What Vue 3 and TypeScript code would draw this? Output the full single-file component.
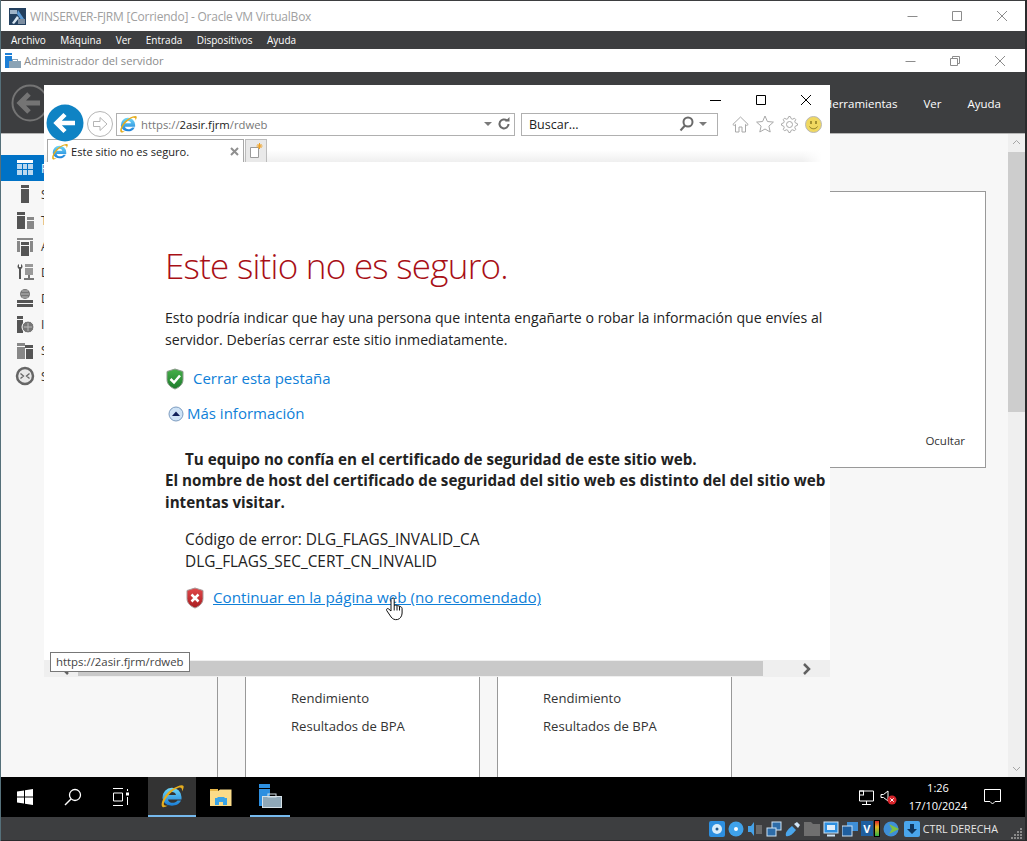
<template>
  <div class="screen">
    <svg class="defs" width="0" height="0">
      <defs>
        <linearGradient id="ieBlue" x1="0" y1="0" x2="0" y2="1">
          <stop offset="0" stop-color="#6fd8f8" />
          <stop offset="1" stop-color="#1a7ed8" />
        </linearGradient>
        <linearGradient id="shieldGreen" x1="0" y1="0" x2="0" y2="1">
          <stop offset="0" stop-color="#46b04a" />
          <stop offset="1" stop-color="#1c7a2c" />
        </linearGradient>
        <linearGradient id="shieldRed" x1="0" y1="0" x2="0" y2="1">
          <stop offset="0" stop-color="#e2484a" />
          <stop offset="1" stop-color="#a81c20" />
        </linearGradient>
        <symbol id="ie" viewBox="0 0 24 24">
          <path fill-rule="evenodd" d="M2.500 13.500a9.500 9.500 0 0 1 19-.5v2.500H8c.5 4 7 4.500 9.500 1H21c-3 7-15.500 7-18-.5-.3-.8-.5-1.600-.5-2.500zM8 11h8c-.5-4-7.500-4-8 0z" fill="url(#ieBlue)" />
          <path d="M2.500 23C-.5 21 4.500 9.500 11.500 5.500 17 2 22.500.2 23.500 2c.5 1-.3 3.500-1.500 5.500.3-3-.5-4.500-3.500-3.800C12.500 5.500 3.800 15 3.800 20c0 1.500 1.500 2 4 1.500-2 1.200-4.200 2.300-5.300 1.500z" fill="#e6ad1e" />
        </symbol>
      </defs>
    </svg>

    <header class="vbox-title">
      <svg class="vbox-logo" width="17" height="17" viewBox="0 0 17 17">
        <rect width="17" height="17" fill="#23405f" />
        <rect x="1" y="2" width="7" height="4" fill="#9fb4c8" />
        <path d="M9 2l6 9-2 2-5-7z" fill="#5c9bd6" />
        <path d="M3 15l5-7 2 2-5 6z" fill="#d8e6f2" />
        <rect x="9" y="11" width="7" height="5" fill="#7c8da0" />
      </svg>
      <span class="vbox-title__text">WINSERVER-FJRM [Corriendo] - Oracle VM VirtualBox</span>
      <div class="win-btns win-btns--grey">
        <svg width="12" height="12" viewBox="0 0 12 12"><path d="M1.500 6.500h10" /></svg>
        <svg width="12" height="12" viewBox="0 0 12 12"><path d="M1.500 1.500h9v9h-9z" /></svg>
        <svg width="12" height="12" viewBox="0 0 12 12"><path d="M1 1l10 10M11 1L1 11" /></svg>
      </div>
    </header>

    <nav class="vbox-menu">
      <span v-for="item in vboxMenu" :key="item">{{ item }}</span>
    </nav>

    <div class="guest">
      <div class="sm-title">
        <svg width="18" height="18" viewBox="0 0 18 18">
          <rect x="1" y="1" width="7" height="2" fill="#1c7fd6" />
          <rect x="1" y="4" width="7" height="12" fill="#1c7fd6" />
          <rect x="5" y="9" width="12" height="7" fill="#8aa3b5" />
          <rect x="8.500" y="7.500" width="5" height="2" fill="none" stroke="#8aa3b5" />
        </svg>
        <span class="sm-title__text">Administrador del servidor</span>
        <div class="win-btns win-btns--grey win-btns--sm">
          <svg width="12" height="12" viewBox="0 0 12 12"><path d="M1.500 6.500h10" /></svg>
          <svg width="12" height="12" viewBox="0 0 12 12"><path d="M1.500 3.500h7v7h-7zM3.500 3.500v-2h7v7h-2" /></svg>
          <svg width="12" height="12" viewBox="0 0 12 12"><path d="M1 1l10 10M11 1L1 11" /></svg>
        </div>
      </div>

      <div class="sm-head">
        <svg class="sm-head__back" width="38" height="38" viewBox="0 0 38 38">
          <circle cx="19" cy="19" r="17.500" fill="none" stroke="#747474" stroke-width="2" />
          <path d="M29 19H10M18 10l-9 9 9 9" fill="none" stroke="#747474" stroke-width="5" />
        </svg>
        <div class="sm-head__menu">
          <span v-for="item in smMenu" :key="item">{{ item }}</span>
        </div>
      </div>

      <div class="sm-main">
        <aside class="side">
          <div
            v-for="(row, i) in sideRows"
            :key="i"
            class="side__row"
            :class="{ 'side__row--on': i === 0 }"
          >
            <svg width="22" height="22" viewBox="0 0 22 22" v-html="row.icon"></svg>
            <span>{{ row.label }}</span>
          </div>
        </aside>

        <main class="content">
          <div class="panel"><span class="panel__hide">Ocultar</span></div>
          <div class="cards">
            <div class="cards__stub"></div>
            <div v-for="n in 2" :key="n" class="card">
              <span>Rendimiento</span>
              <span>Resultados de BPA</span>
            </div>
          </div>
        </main>

        <div class="vscroll">
          <svg width="17" height="17" viewBox="0 0 17 17"><path d="M5 10l3.500-3.500L12 10" /></svg>
          <div class="vscroll__thumb"></div>
          <svg class="vscroll__down" width="17" height="17" viewBox="0 0 17 17"><path d="M5 7l3.500 3.500L12 7" /></svg>
        </div>
      </div>

      <div class="taskbar">
        <div class="task task--plain">
          <svg width="18" height="18" viewBox="0 0 18 18"><path d="M1 3.500l7-1v6H1zM9 2.300l8-1.200v7.400H9zM1 9.500h7v6l-7-1zM9 9.500h8v7.400l-8-1.200z" fill="#fff" /></svg>
        </div>
        <div class="task task--plain">
          <svg width="20" height="20" viewBox="0 0 20 20"><circle cx="12" cy="8" r="5.500" fill="none" stroke="#fff" stroke-width="1.300" /><path d="M8 12l-6 6" stroke="#fff" stroke-width="1.500" /></svg>
        </div>
        <div class="task task--plain">
          <svg width="18" height="18" viewBox="0 0 18 18"><path d="M1 .500h10M1 17.500h10M1.500 5h9v8h-9zM15.500 1v2M15.500 9v8" fill="none" stroke="#fff" /><rect x="14" y="4.500" width="3" height="3" fill="#fff" /></svg>
        </div>
        <div class="task task--ie">
          <svg width="24" height="24"><use href="#ie" /></svg>
        </div>
        <div class="task task--files">
          <svg width="22" height="19" viewBox="0 0 22 19">
            <path d="M0 3h8l2-1.500h11.500V18H0z" fill="#fbdc89" />
            <path d="M0 1h8v2H0z" fill="#e9b94b" />
            <path d="M5 17v-7h2.500v-1h7v1H17v7h-4v-3H9v3z" fill="#3aa4e6" />
          </svg>
        </div>
        <div class="task task--sm">
          <svg width="25" height="25" viewBox="0 0 25 25">
            <path d="M1 0h11v4H1zM1 5h11v17H1z" fill="#2d8fe0" />
            <rect x="4.500" y="12.500" width="19" height="11" fill="#8fa8b8" stroke="#d6e1e8" />
            <rect x="10" y="10" width="8" height="3" fill="none" stroke="#d6e1e8" />
          </svg>
        </div>
        <div class="tray">
          <svg width="17" height="17" viewBox="0 0 17 17"><path d="M1.500 2h14v10h-14zM8.500 12v3M4 15.500h9" fill="none" stroke="#fff" /><rect x="1.500" y="2" width="4" height="4" fill="none" stroke="#fff" /></svg>
          <svg class="tray__vol" width="17" height="16" viewBox="0 0 17 16">
            <path d="M1 5.500h2.500L8 2v10L3.500 8.500H1z" fill="none" stroke="#fff" />
            <circle cx="12" cy="11" r="4.500" fill="#d8232a" />
            <path d="M10.300 9.300l3.400 3.400M13.700 9.300l-3.400 3.400" stroke="#fff" />
          </svg>
          <div class="clock">
            <span>1:26</span>
            <span>17/10/2024</span>
          </div>
          <svg class="tray__note" width="17" height="16" viewBox="0 0 17 16"><path d="M.500.500h16v12h-5.500l-2.500 2.500L6 12.500H.500z" fill="none" stroke="#fff" /></svg>
        </div>
      </div>
    </div>

    <footer class="status">
      <svg width="16" height="16" viewBox="0 0 16 16"><rect width="16" height="16" rx="2" fill="#2d8fe0" /><circle cx="8" cy="8" r="5" fill="#d8ecfa" /><circle cx="8" cy="8" r="1.500" fill="#245a8c" /></svg>
      <svg width="16" height="16" viewBox="0 0 16 16"><circle cx="8" cy="8" r="7.500" fill="#3fa2ea" /><circle cx="8" cy="8" r="2" fill="#fff" /></svg>
      <svg width="16" height="16" viewBox="0 0 16 16"><path d="M1 5h3l3-4v14l-3-4H1z" fill="#45a2e8" /><rect x="9" y="4" width="6" height="9" fill="#6c6c6c" /></svg>
      <svg width="16" height="16" viewBox="0 0 16 16"><rect x="6" y="1" width="9" height="8" fill="#2d6ca8" stroke="#cfe4f5" /><rect x="1" y="7" width="9" height="8" fill="#2d6ca8" stroke="#cfe4f5" /></svg>
      <svg width="16" height="16" viewBox="0 0 16 16"><path d="M1 15c-1-3 1-6 6-10l4 4c-4 5-7 7-10 6z" fill="#4aa6ec" /><path d="M9 3l3-2 3 3-2 3z" fill="#cfe4f5" /></svg>
      <svg width="16" height="16" viewBox="0 0 16 16"><path d="M0 1h7l2 2h7v12H0z" fill="#6f6f6f" /></svg>
      <svg width="16" height="16" viewBox="0 0 16 16"><rect x="1" y="1" width="14" height="11" fill="#2d8fe0" stroke="#cfe4f5" /><rect x="4" y="4" width="8" height="5" fill="#dfeefb" /><path d="M4 14.500h8" stroke="#cfe4f5" stroke-width="2" /></svg>
      <svg width="16" height="16" viewBox="0 0 16 16"><rect x="5" y="1" width="11" height="9" fill="#3f8fd6" /><rect x="0" y="5" width="10" height="10" fill="#1f5f9f" stroke="#cfe4f5" /></svg>
      <span class="status__v">V</span>
      <span class="status__meter"></span>
      <svg width="18" height="16" viewBox="0 0 18 16"><circle cx="8" cy="8" r="7.500" fill="#3f8fd6" /><path d="M6 3l10 5-10 5 3-5z" fill="#7fc241" /></svg>
      <svg width="16" height="16" viewBox="0 0 16 16"><rect width="16" height="16" rx="2" fill="#4aa6ec" /><path d="M6 3h4v5h3l-5 5-5-5h3z" fill="#10365c" /></svg>
      <span class="status__key">CTRL DERECHA</span>
      <svg class="status__grip" width="12" height="12" viewBox="0 0 12 12">
        <path d="M9 1h2v2H9zM6 4h2v2H6zM9 4h2v2H9zM3 7h2v2H3zM6 7h2v2H6zM9 7h2v2H9zM0 10h2v2H0zM3 10h2v2H3zM6 10h2v2H6zM9 10h2v2H9z" fill="#8a8a8a" />
      </svg>
    </footer>

    <section class="ie">
      <div class="ie__caption">
        <div class="win-btns win-btns--dark">
          <svg width="12" height="12" viewBox="0 0 12 12"><path d="M0 6.500h11" /></svg>
          <svg width="12" height="12" viewBox="0 0 12 12"><path d="M1.500 1.500h9v9h-9z" /></svg>
          <svg width="12" height="12" viewBox="0 0 12 12"><path d="M1 1l10 10M11 1L1 11" /></svg>
        </div>
      </div>

      <div class="ie__bar">
        <svg class="ie__back" width="38" height="38" viewBox="0 0 38 38">
          <circle cx="19" cy="19" r="18.500" fill="#0f83c4" />
          <path d="M29 19H11M19 10.500L10.500 19l8.500 8.500" fill="none" stroke="#fff" stroke-width="4.500" />
        </svg>
        <svg class="ie__fwd" width="26" height="26" viewBox="0 0 26 26">
          <circle cx="13" cy="13" r="12.500" fill="#fff" stroke="#b5b5b5" />
          <path d="M6.500 10.500h6.500V6.500l7 6.500-7 6.500v-4H6.500z" fill="none" stroke="#b5b5b5" />
        </svg>
        <div class="addr">
          <svg width="18" height="18"><use href="#ie" /></svg>
          <span class="addr__url">https://<b>2asir.fjrm</b>/rdweb</span>
          <svg class="addr__caret" width="10" height="10" viewBox="0 0 10 10"><path d="M1 3h8L5 7z" fill="#7a7a7a" /></svg>
          <svg width="14" height="14" viewBox="0 0 14 14"><path d="M11.500 7a4.500 4.500 0 1 1-1.500-3.400" fill="none" stroke="#6a6a6a" stroke-width="2" /><path d="M8 4.500h4.500V0z" fill="#6a6a6a" /></svg>
        </div>
        <div class="search">
          <span>Buscar...</span>
          <svg class="search__glass" width="15" height="16" viewBox="0 0 15 16"><circle cx="9" cy="6" r="4.500" fill="none" stroke="#6a6a6a" stroke-width="2" /><path d="M6 9.500L1.500 14.500" stroke="#6a6a6a" stroke-width="2" /></svg>
          <svg width="10" height="10" viewBox="0 0 10 10"><path d="M1 3h8L5 7z" fill="#7a7a7a" /></svg>
        </div>
        <div class="ie__tools">
          <svg width="17" height="17" viewBox="0 0 17 17"><path d="M.800 8.500L8.500 1l7.700 7.500-1.500 1-1.200-1.100V16h-3.500v-5h-3v5H3.500V8.400L2.300 9.500z" fill="#fff" stroke="#a8a8a8" /></svg>
          <svg width="18" height="18" viewBox="0 0 18 18"><path d="M9 1l2.400 5.500 6 .6-4.500 4 1.300 5.900L9 14l-5.200 3 1.300-5.900-4.500-4 6-.6z" fill="#fff" stroke="#a8a8a8" /></svg>
          <svg width="17" height="17" viewBox="0 0 17 17"><path :d="gearPath" fill="none" stroke="#a8a8a8" /><circle cx="8.500" cy="8.500" r="3" fill="none" stroke="#a8a8a8" /></svg>
          <svg width="17" height="17" viewBox="0 0 17 17"><circle cx="8.500" cy="8.500" r="8" fill="#f0d860" stroke="#b8b8b8" /><path d="M6 5v3M11 5v3" stroke="#8a7a20" stroke-width="1.500" /><path d="M4.500 10.500c1.500 3 6.500 3 8 0" fill="none" stroke="#8a7a20" /></svg>
        </div>
      </div>

      <div class="ie__tabs">
        <div class="tab">
          <svg width="17" height="17"><use href="#ie" /></svg>
          <span>Este sitio no es seguro.</span>
          <svg class="tab__x" width="9" height="9" viewBox="0 0 9 9"><path d="M1 1l7 7M8 1L1 8" stroke="#8f8f8f" stroke-width="2" /></svg>
        </div>
        <div class="newtab">
          <svg width="16" height="16" viewBox="0 0 16 16">
            <path d="M2.500 4.500h8v10h-8z" fill="#fff" stroke="#9a9a9a" />
            <path d="M11.500 0v6M8.500 3h6M9.500 1l4 4M13.500 1l-4 4" stroke="#f0a020" />
          </svg>
        </div>
      </div>

      <div class="page">
        <h1>Este sitio no es seguro.</h1>
        <p class="page__lead">
          Esto podría indicar que hay una persona que intenta engañarte o robar la información que envíes al<br />
          servidor. Deberías cerrar este sitio inmediatamente.
        </p>
        <div class="page__close">
          <svg width="20" height="22" viewBox="0 0 20 22">
            <path d="M10 1l8 2.500v8c0 5-4 8-8 9.500-4-1.500-8-4.500-8-9.500v-8z" fill="url(#shieldGreen)" stroke="#8c9a8c" />
            <path d="M5.500 11l3.500 3.500 6-7" fill="none" stroke="#fff" stroke-width="2.500" />
          </svg>
          <a>Cerrar esta pestaña</a>
        </div>
        <div class="page__more">
          <svg width="16" height="16" viewBox="0 0 16 16">
            <circle cx="8" cy="8" r="7" fill="#cfe3f6" stroke="#7d9cc0" />
            <path d="M4 10l4-4.500 4 4.500z" fill="#10205a" />
          </svg>
          <a>Más información</a>
        </div>
        <div class="page__strong">
          <div class="page__indent">Tu equipo no confía en el certificado de seguridad de este sitio web.</div>
          <div>El nombre de host del certificado de seguridad del sitio web es distinto del del sitio web</div>
          <div>intentas visitar.</div>
        </div>
        <div class="page__code">
          <div>Código de error: DLG_FLAGS_INVALID_CA</div>
          <div>DLG_FLAGS_SEC_CERT_CN_INVALID</div>
        </div>
        <div class="page__go">
          <svg width="20" height="22" viewBox="0 0 20 22">
            <path d="M10 1l8 2.500v8c0 5-4 8-8 9.500-4-1.500-8-4.500-8-9.500v-8z" fill="url(#shieldRed)" stroke="#a89a9a" />
            <path d="M6.500 7.500l7 7M13.500 7.500l-7 7" stroke="#fff" stroke-width="2.500" />
          </svg>
          <a class="page__link">Continuar en la página web (no recomendado)</a>
        </div>
      </div>

      <div class="hscroll">
        <svg class="hscroll__left" width="10" height="12" viewBox="0 0 10 12"><path d="M8 1L3 6l5 5" fill="none" stroke="#606060" stroke-width="2.500" /></svg>
        <div class="hscroll__thumb"></div>
        <svg width="10" height="12" viewBox="0 0 10 12"><path d="M2 1l5 5-5 5" fill="none" stroke="#606060" stroke-width="2.500" /></svg>
      </div>

      <div class="ie__tip">https://2asir.fjrm/rdweb</div>
      <svg class="ie__cursor" width="18" height="24" viewBox="0 0 18 24">
        <path d="M6 1.500c1-1 2.200-.5 2.200.8v6.200l1.600-.4 1.600.4 1.500.5 2 .8c1 .6 1.200 1.200 1.200 2.200v4c0 3-2 6-4.500 6.500-3 .6-5-.5-6.500-2.500L.700 13.500c-.8-1.500.8-2.500 2-1.500L5 14V2.500z" fill="#fff" stroke="#111" />
        <path d="M8.200 8.500v5M11 9v4.500M13.500 9.500v4" stroke="#111" />
      </svg>
    </section>
  </div>
</template>

<script setup lang="ts">
interface SideRow {
  label: string
  icon: string
}

const vboxMenu: string[] = ['Archivo', 'Máquina', 'Ver', 'Entrada', 'Dispositivos', 'Ayuda']
const smMenu: string[] = ['Herramientas', 'Ver', 'Ayuda']

const sideRows: SideRow[] = [
  {
    label: 'Panel',
    icon: '<path d="M3 3h16v3H3z" fill="#fff"/><path d="M3 7h5v5H3zM9 7h4v5H9zM14 7h5v5h-5zM3 13h5v5H3zM9 13h4v5H9zM14 13h5v5h-5z" fill="#bcd9ef"/>'
  },
  { label: 'Servidor', icon: '<path d="M7 2h8v3H7zM7 6h8v14H7z" fill="#555"/>' },
  { label: 'Todos', icon: '<path d="M3 3h8v3H3zM3 7h8v13H3z" fill="#555"/><path d="M13 8h7v3h-7zM13 12h7v8h-7z" fill="#888"/>' },
  { label: 'AD DS', icon: '<path d="M3 3h16v2H3zM3 6h3v11H3zM16 6h3v11h-3z" fill="#888"/><path d="M7 7h8v3H7zM7 11h8v10H7z" fill="#555"/>' },
  { label: 'DHCP', icon: '<path d="M5 3c-2 1-2 4 0 5v10h2V8c2-1 2-4 0-5v3H5z" fill="#555"/><path d="M11 3h8v3h-8zM11 7h8v7h-8z" fill="#999"/><path d="M14 14h2v3h4v2H10v-2h4z" fill="#777"/>' },
  { label: 'DNS', icon: '<circle cx="11" cy="7" r="5" fill="#777"/><path d="M8 4h6M7 7h8M8 10h6" stroke="#bbb"/><path d="M3 13h16v3H3zM3 17h16v3H3z" fill="#555"/>' },
  { label: 'IIS', icon: '<path d="M3 3h6v3H3zM3 7h6v13H3z" fill="#555"/><circle cx="14" cy="14" r="6" fill="#777" stroke="#fff"/><path d="M10 14h8M14 10v8" stroke="#bbb"/>' },
  { label: 'Servicios', icon: '<path d="M3 4h8v3H3zM3 8h8v12H3z" fill="#888"/><path d="M11 6h8v3h-8zM12 10h7v10h-7z" fill="#555"/>' },
  {
    label: 'Servicios',
    icon: '<circle cx="11" cy="11" r="8" fill="#e8e8e8" stroke="#666" stroke-width="2.500"/><path d="M6.500 8.500l3 2.500-3 2.500M15.500 8.500l-3 2.500 3 2.500" fill="none" stroke="#666" stroke-width="1.300"/>'
  }
]

// toothed ring for the IE settings button
const gearPath = (() => {
  const teeth = 8
  const points: string[] = []
  for (let i = 0; i < teeth * 4; i++) {
    const r = i % 4 < 2 ? 8 : 6
    const a = ((i - 0.5) * Math.PI * 2) / (teeth * 4)
    points.push(`${(8.5 + r * Math.cos(a)).toFixed(2)} ${(8.5 + r * Math.sin(a)).toFixed(2)}`)
  }
  return `M${points.join('L')}z`
})()
</script>

<style>
html,
body {
  margin: 0;
  background: #2a2a2c;
}
</style>

<style scoped>
.screen {
  position: relative;
  box-sizing: border-box;
  width: 1027px;
  height: 841px;
  overflow: hidden;
  display: flex;
  flex-direction: column;
  font-family: "Open Sans", "Noto Sans", sans-serif;
  color: #222;
  background: #3d3e40;
  border-left: 1px solid #55707a;
  border-right: 2px solid #2a2a2c;
}

.defs {
  position: absolute;
}

.vbox-title {
  flex: 0 0 31px;
  box-sizing: border-box;
  display: flex;
  align-items: center;
  gap: 4px;
  padding-left: 8px;
  background: #fff;
  border-top: 1px solid #3d3e40;
}

.vbox-title__text {
  font-size: 12px;
  letter-spacing: -0.23px;
  color: #a0a0a0;
}

.win-btns {
  margin-left: auto;
  display: flex;
  gap: 33px;
  padding-right: 17px;
}

.win-btns svg {
  display: block;
  fill: none;
  stroke: #8c8c8c;
}

.win-btns--sm {
  padding-right: 19px;
}

.win-btns--dark {
  padding-right: 18px;
}

.win-btns--dark svg {
  stroke: #000;
}

.vbox-menu {
  flex: 0 0 18px;
  display: flex;
  align-items: center;
  gap: 14.400px;
  padding-left: 10px;
  font-size: 10px;
  color: #fff;
  background: #3d3e40;
}

.guest {
  flex: 1;
  min-height: 0;
  display: flex;
  flex-direction: column;
}

.sm-title {
  flex: 0 0 23px;
  display: flex;
  align-items: center;
  gap: 2px;
  padding-left: 3px;
  background: #fff;
}

.sm-title__text {
  font-size: 11.200px;
  color: #8a8a8a;
}

.sm-head {
  flex: 0 0 62px;
  display: flex;
  align-items: center;
  padding-left: 10px;
  background: #3d3e40;
  border-bottom: 1px solid #b5b5b5;
  box-sizing: border-box;
}

.sm-head__menu {
  margin-left: auto;
  display: flex;
  gap: 26px;
  padding: 2px 24px 0 0;
  font-size: 11.500px;
  color: #fff;
}

.sm-main {
  flex: 1;
  min-height: 0;
  display: flex;
  background: #f7f7f7;
}

.side {
  flex: 0 0 130px;
  padding-top: 21px;
}

.side__row {
  height: 26px;
  display: flex;
  align-items: center;
  gap: 5px;
  padding-left: 13px;
  white-space: nowrap;
  font-size: 12px;
  color: #333;
}

.side__row svg {
  flex: none;
}

.side__row--on {
  background: #0072c6;
  color: #fff;
}

.content {
  flex: 1;
  min-width: 0;
  display: flex;
  flex-direction: column;
  gap: 22px;
  overflow: hidden;
  padding: 57px 22px 0 0;
}

.panel {
  flex: 0 0 277px;
  box-sizing: border-box;
  position: relative;
  background: #fff;
  border: 1px solid #999;
  display: flex;
  align-items: flex-end;
  justify-content: flex-end;
  padding: 0 20px 19px 0;
}

.panel__hide {
  font-size: 11.500px;
  color: #333;
}

.cards {
  flex: 1;
  display: flex;
  gap: 17px;
}

.cards__stub {
  flex: 0 0 86px;
  margin-right: 10px;
  border-right: 1px solid #999;
}

.card {
  flex: 0 0 235px;
  box-sizing: border-box;
  background: #fff;
  border: 1px solid #999;
  border-bottom: 0;
  display: flex;
  flex-direction: column;
  justify-content: flex-end;
  gap: 9px;
  padding: 0 0 41px 45px;
  font-size: 13.100px;
  line-height: 19px;
  color: #333;
}

.vscroll {
  flex: 0 0 17px;
  display: flex;
  flex-direction: column;
  align-items: center;
  background: #efefef;
}

.vscroll svg {
  display: block;
  fill: none;
  stroke: #a5a5a5;
  flex: none;
}

.vscroll__thumb {
  flex: 0 0 260px;
  width: 17px;
  background: #cdcdcd;
  margin-top: 1px;
}

.vscroll__down {
  margin-top: auto;
}

.taskbar {
  flex: 0 0 40px;
  display: flex;
  background: #000;
}

.task {
  display: flex;
  align-items: center;
  justify-content: center;
  box-sizing: border-box;
}

.task--plain {
  flex: 0 0 48px;
}

.task--ie {
  flex: 0 0 48px;
  margin-left: 3px;
  background: #333;
  border-bottom: 2px solid #76b9ed;
}

.task--files {
  flex: 0 0 48px;
  padding-left: 2px;
}

.task--sm {
  flex: 0 0 40px;
  margin-left: 6px;
  border-bottom: 2px solid #76b9ed;
}

.tray {
  margin-left: auto;
  display: flex;
  align-items: center;
  padding-right: 24px;
}

.tray svg {
  display: block;
}

.tray__vol {
  margin-left: 5px;
}

.clock {
  width: 66px;
  margin-left: 8px;
  display: flex;
  flex-direction: column;
  align-items: center;
  gap: 4px;
  font-size: 11px;
  line-height: 14px;
  color: #fff;
}

.tray__note {
  margin-left: 13px;
}

.status {
  flex: 0 0 24px;
  display: flex;
  align-items: center;
  justify-content: flex-end;
  gap: 3px;
  background: #3d3e40;
  box-sizing: border-box;
  border-bottom: 1px solid #2a2a2c;
}

.status svg {
  display: block;
  flex: none;
}

.status__v {
  width: 12px;
  height: 15px;
  background: #1f5f9f;
  color: #fff;
  font-size: 11px;
  font-weight: 700;
  line-height: 15px;
  text-align: center;
}

.status__meter {
  width: 4px;
  height: 15px;
  margin-left: -2px;
  background: linear-gradient(#d8232a, #e6b422 40%, #2fb344);
  border: 1px solid #000;
}

.status__key {
  margin: 0 10px 0 0;
  font-size: 10.700px;
  color: #e6e6e6;
}

.status__grip {
  margin: 8px 2px 0 0;
}

/* browser window, floats over the server manager */
.ie {
  position: absolute;
  left: 43px;
  top: 85px;
  width: 786px;
  height: 592px;
  display: flex;
  flex-direction: column;
  background: #fff;
}

.ie__caption {
  flex: 0 0 26px;
  display: flex;
  align-items: center;
  padding-top: 4px;
  box-sizing: border-box;
}

.ie__bar {
  flex: 0 0 26px;
  display: flex;
  align-items: center;
  position: relative;
}

.ie__back {
  position: absolute;
  left: 2px;
  top: -7px;
}

.ie__fwd {
  margin-left: 43px;
  flex: none;
}

.addr,
.search {
  box-sizing: border-box;
  height: 23px;
  display: flex;
  align-items: center;
  border: 1px solid #b0b0b0;
  background: #fff;
  font-size: 11.300px;
}

.addr {
  width: 399px;
  margin-left: 3px;
  padding: 0 3px 0 2px;
}

.addr__url {
  margin-left: 4px;
  color: #777;
}

.addr__url b {
  font-weight: 400;
  color: #222;
}

.addr__caret {
  margin: 0 4px 0 auto;
}

.search {
  width: 197px;
  margin-left: 6px;
  padding: 0 9px 0 7px;
  font-size: 12.500px;
}

.search__glass {
  margin: 0 4px 0 auto;
}

.ie__tools {
  display: flex;
  align-items: center;
  gap: 7px;
  margin-left: 14px;
}

.ie__tools svg {
  display: block;
}

.ie__tabs {
  flex: 0 0 23px;
  margin-top: 2px;
  display: flex;
  align-items: stretch;
  padding: 0 8px 0 3px;
  background:
    linear-gradient(to right, rgba(255, 255, 255, 0) calc(100% - 28px), #fff calc(100% - 8px)),
    linear-gradient(#fff 48%, #efefef);
}

.tab {
  flex: 0 0 197px;
  box-sizing: border-box;
  display: flex;
  align-items: center;
  gap: 3px;
  padding: 0 4px 0 3px;
  background: #fff;
  border: 1px solid #a8a8a8;
  border-bottom: 0;
  font-size: 11.100px;
  color: #222;
}

.tab__x {
  margin-left: auto;
}

.newtab {
  flex: 0 0 22px;
  margin-left: 1px;
  box-sizing: border-box;
  background: #e9e9e9;
  border: 1px solid #bcbcbc;
  border-bottom: 0;
  display: flex;
  align-items: center;
  justify-content: center;
}

.page {
  flex: 1;
  min-height: 0;
  padding-left: 121px;
  white-space: nowrap;
  font-size: 14.150px;
  line-height: 21.500px;
  overflow: hidden;
  color: #222;
}

.page h1 {
  margin: 80px 0 0;
  font-size: 35px;
  line-height: 48px;
  font-weight: 300;
  letter-spacing: -0.75px;
  color: #a80f16;
}

.page a {
  color: #0f7fd8;
}

.page__lead {
  margin: 17px 0 0;
}

.page__close {
  margin-top: 18px;
  display: flex;
  align-items: center;
  gap: 8px;
  font-size: 15px;
}

.page__more {
  margin-top: 13px;
  margin-left: 3px;
  display: flex;
  align-items: center;
  gap: 3px;
  font-size: 15px;
}

.page__strong {
  margin-top: 24px;
  font-size: 15.200px;
  font-weight: 700;
}

.page__indent {
  padding-left: 20px;
}

.page__code {
  margin-top: 16px;
  padding-left: 20px;
  font-size: 15.400px;
}

.page__go {
  margin: 15px 0 0 20px;
  display: flex;
  align-items: center;
  gap: 8px;
  font-size: 15.200px;
}

.page__link {
  text-decoration: underline;
}

.hscroll {
  flex: 0 0 17px;
  display: flex;
  align-items: center;
  background: #efefef;
  padding-left: 16px;
}

.hscroll__left {
  margin-right: 8px;
}

.hscroll__thumb {
  width: 685px;
  height: 15px;
  background: #c9c9c9;
}

.hscroll svg:last-child {
  margin-left: 39px;
}

.ie__tip {
  position: absolute;
  left: 6px;
  top: 567px;
  box-sizing: border-box;
  width: 140px;
  height: 20px;
  padding-left: 5px;
  background: #fff;
  border: 1px solid #777;
  font-size: 11.400px;
  line-height: 18px;
  color: #444;
}

.ie__cursor {
  position: absolute;
  left: 342px;
  top: 512px;
}
</style>
